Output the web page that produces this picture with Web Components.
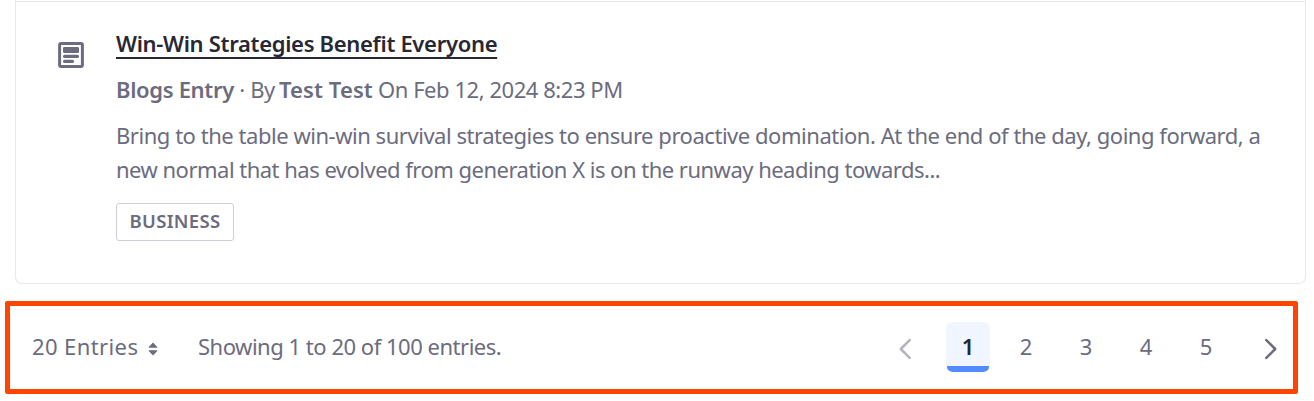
<!DOCTYPE html>
<html lang="en">
<head>
<meta charset="utf-8">
<title>Search results</title>
<style>
body { margin: 0; background: #fff; font-family: "Noto Sans", "Open Sans", sans-serif; font-size: 22px; line-height: 34px; color: #6b6c7e; }
</style>
</head>
<body>
<search-page></search-page>
<script>
const define = (name, html) => customElements.define(name, class extends HTMLElement {
  constructor() {
    super();
    const t = document.createElement('template');
    t.innerHTML = html;
    this.attachShadow({ mode: 'open' }).append(t.content.cloneNode(true));
  }
});

define('blog-icon', `
<style>:host{display:block;width:26px;height:26px}svg{display:block}</style>
<svg width="26" height="26" viewBox="0 0 26 26">
  <rect x="1.6" y="1.6" width="22.8" height="22.8" rx="1.5" fill="none" stroke="#6b6c7e" stroke-width="3"/>
  <rect x="5" y="5" width="16" height="6" rx="1.2" fill="#6b6c7e"/>
  <rect x="5" y="12.7" width="16" height="3.3" rx="1.5" fill="#6b6c7e"/>
  <rect x="5" y="17.7" width="11" height="3.3" rx="1.5" fill="#6b6c7e"/>
</svg>`);

define('tag-label', `
<style>
:host{display:flex;box-sizing:border-box;width:118px;height:38px;padding-bottom:2px;border:1px solid #cdced9;border-radius:3px;align-items:center;justify-content:center;font-size:18.5px;font-weight:600;line-height:24px;letter-spacing:.3px;white-space:nowrap}
</style><slot></slot>`);

define('result-item', `
<style>
:host{display:grid;grid-template-columns:26px 1fr;column-gap:32px;box-sizing:border-box;height:282px;border-top:1px solid #e7e7ed;padding:24px 30px 0 42px}
blog-icon{margin-top:16px}
.body{display:flex;flex-direction:column;gap:12px;align-items:flex-start;white-space:nowrap}
::slotted([slot=title]){color:#272833;font-weight:600;letter-spacing:-.31px;text-decoration:underline 2px;text-underline-offset:5px;text-decoration-skip-ink:none}
.tag{margin-top:5px}
</style>
<blog-icon></blog-icon>
<div class="body"><slot name="title"></slot><slot name="meta"></slot><slot name="text"></slot><div class="tag"><slot name="tag"></slot></div></div>`);

define('result-card', `
<style>:host{display:block;box-sizing:border-box;width:1291px;height:284px;margin-left:15px;padding-top:1px;border:1px solid #e7e7ed;border-top:0;border-radius:0 0 7px 7px}</style>
<slot></slot>`);

define('meta-line', `
<style>:host{display:flex}b{font-weight:600}.a{width:118px;letter-spacing:-.33px}.b{width:45px;white-space:pre;letter-spacing:-.4px}.c{width:99px;letter-spacing:.1px}.d{letter-spacing:-.45px}</style>
<b class="a">Blogs Entry</b><span class="b"> · By </span><b class="c">Test Test</b><span class="d">On Feb 12, 2024 8:23 PM</span>`);

define('page-number', `
<style>
:host{display:flex;box-sizing:border-box;width:60px;height:50px;padding-bottom:2px;justify-content:center;align-items:center}
:host([active]){position:relative;width:44px;margin:0 6px 0 0;background:#f0f5ff;border-radius:6px;color:#272833;font-weight:600}
:host([active])::after{content:"";position:absolute;left:1px;right:1px;bottom:0;height:6px;background:#528bff;border-radius:0 0 6px 6px/0 0 5px 5px}
</style><slot></slot>`);

define('page-arrow', `
<style>:host{display:block;width:14px;height:22px}:host([disabled]){opacity:.5}:host([prev]) svg{transform:scaleX(-1)}svg{display:block}</style>
<svg width="14" height="22" viewBox="0 0 14 22"><path d="M2.3 2.2 L11.2 11 L2.3 19.8" fill="none" stroke="#6b6c7e" stroke-width="2.5" stroke-linecap="round" stroke-linejoin="round"/></svg>`);

define('pagination-bar', `
<style>
:host{display:flex;align-items:center;box-sizing:border-box;width:1293px;height:93px;margin:17px 0 0 5px;border:5px solid #ff4500;border-radius:2px;padding:0 15px 0 22px;white-space:nowrap}
.entries{width:116px;letter-spacing:.4px}
span{margin-top:-4px}
svg{display:block;margin-top:3px}
.showing{margin-left:40px;letter-spacing:-.48px}
nav{display:flex;align-items:center;margin-left:auto;height:50px;margin-top:-1px}
page-arrow{margin-top:4px}
page-arrow[prev]{margin-right:34px}
page-arrow:last-child{margin-left:28px}
</style>
<span class="entries">20 Entries</span>
<svg width="10" height="14" viewBox="0 0 10 14"><path d="M5 .5 9.3 5.1Q9.6 5.8 8.9 5.8H1.1Q.4 5.8.7 5.1ZM5 13.5.7 8.9Q.4 8.2 1.1 8.2H8.9Q9.6 8.2 9.3 8.9Z" fill="#6b6c7e"/></svg>
<span class="showing">Showing 1 to 20 of 100 entries.</span>
<nav><page-arrow prev disabled></page-arrow><page-number active>1</page-number><page-number>2</page-number><page-number>3</page-number><page-number>4</page-number><page-number>5</page-number><page-arrow></page-arrow></nav>`);

define('result-excerpt', `
<style>:host{display:block}.l1{letter-spacing:-.462px}.l2{letter-spacing:-.51px}</style>
<div class="l1">Bring to the table win-win survival strategies to ensure proactive domination. At the end of the day, going forward, a</div>
<div class="l2">new normal that has evolved from generation X is on the runway heading towards...</div>`);

define('search-page', `
<style>:host{display:block;height:401px;overflow:hidden}</style>
<result-card><result-item>
<span slot="title">Win-Win Strategies Benefit Everyone</span>
<meta-line slot="meta"></meta-line>
<result-excerpt slot="text"></result-excerpt>
<tag-label slot="tag">BUSINESS</tag-label>
</result-item></result-card>
<pagination-bar></pagination-bar>`);
</script>
</body>
</html>
